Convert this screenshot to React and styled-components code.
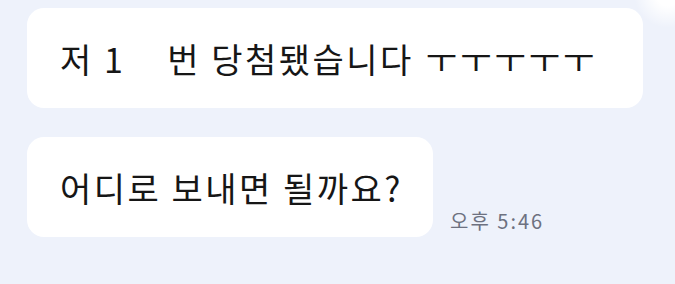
import React from "react"
import styled, { createGlobalStyle } from "styled-components"

const GlobalStyle = createGlobalStyle`
  html, body {
    margin: 0;
    padding: 0;
    background: radial-gradient(circle at 668px -6px, #ffffff 0, #ffffff 12px, rgba(255,255,255,0) 34px), #eef2fb;
    font-family: "Noto Sans CJK KR", "Noto Sans", sans-serif;
  }
`

const Chat = styled.div`
  width: 675px;
  height: 284px;
  box-sizing: border-box;
  padding: 8px 0 0 27px;
  display: flex;
  flex-direction: column;
  gap: 29px;
`

const Row = styled.div`
  display: flex;
  align-items: flex-end;
  gap: 17px;
`

const Bubble = styled.div`
  width: ${p => p.width}px;
  height: 100px;
  box-sizing: border-box;
  padding-left: 33px;
  background: #ffffff;
  border-radius: 17px;
  display: flex;
  align-items: center;
  color: #161616;
  font-size: 34px;
  letter-spacing: 2.5px;
  white-space: pre;
`

const Gap = styled.span`
  display: inline-block;
  width: ${p => p.w}px;
`

const Cry = styled.span`
  margin-left: 12px;
  letter-spacing: 3px;
`

const Time = styled.span`
  margin-bottom: 2px;
  font-size: 20px;
  color: #6d7180;
  letter-spacing: 2px;
`

export default function App() {
  return (
    <>
      <GlobalStyle />
      <Chat>
        <Row>
          <Bubble width={616}>
            저 1<Gap w={42} />번 당첨됐습니다<Cry>ㅜㅜㅜㅜㅜ</Cry>
          </Bubble>
        </Row>
        <Row>
          <Bubble width={406}>
            어디로 보내면 될까요?
          </Bubble>
          <Time>오후 5:46</Time>
        </Row>
      </Chat>
    </>
  )
}
